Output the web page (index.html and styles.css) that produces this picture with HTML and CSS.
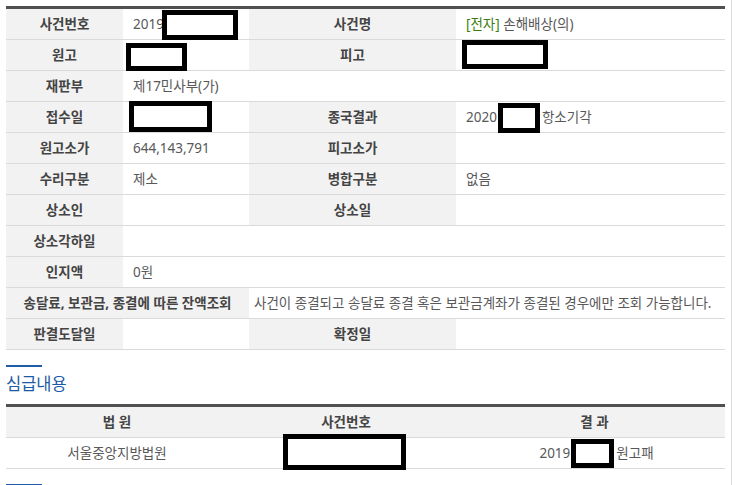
FILE: index.html
```html
<!DOCTYPE html>
<html lang="ko">
<head>
<meta charset="utf-8">
<title>사건일반내용</title>
<link rel="stylesheet" href="styles.css">
</head>
<body>
<div class="page">
  <table class="info">
    <colgroup>
      <col class="c-lab1"><col class="c-val1"><col class="c-lab2"><col class="c-val2">
    </colgroup>
    <tbody>
      <tr>
        <th>사건번호</th>
        <td>2019<span class="redact r1"></span></td>
        <th>사건명</th>
        <td><span class="tag">[전자]</span> 손해배상(의)</td>
      </tr>
      <tr>
        <th>원고</th>
        <td><span class="redact r2"></span></td>
        <th>피고</th>
        <td><span class="redact r3"></span></td>
      </tr>
      <tr>
        <th>재판부</th>
        <td colspan="3">제17민사부(가)</td>
      </tr>
      <tr>
        <th>접수일</th>
        <td><span class="redact r4"></span></td>
        <th>종국결과</th>
        <td>2020<span class="redact r5"></span>항소기각</td>
      </tr>
      <tr>
        <th>원고소가</th>
        <td>644,143,791</td>
        <th>피고소가</th>
        <td></td>
      </tr>
      <tr>
        <th>수리구분</th>
        <td>제소</td>
        <th>병합구분</th>
        <td>없음</td>
      </tr>
      <tr>
        <th>상소인</th>
        <td></td>
        <th>상소일</th>
        <td></td>
      </tr>
      <tr>
        <th>상소각하일</th>
        <td colspan="3"></td>
      </tr>
      <tr>
        <th>인지액</th>
        <td colspan="3">0원</td>
      </tr>
      <tr>
        <th colspan="2">송달료, 보관금, 종결에 따른 잔액조회</th>
        <td colspan="2" class="notice">사건이 종결되고 송달료 종결 혹은 보관금계좌가 종결된 경우에만 조회 가능합니다.</td>
      </tr>
      <tr>
        <th>판결도달일</th>
        <td></td>
        <th>확정일</th>
        <td></td>
      </tr>
    </tbody>
  </table>

  <section class="sub">
    <h3 class="sub-title">심급내용</h3>
    <table class="list">
      <colgroup>
        <col class="l1"><col class="l2"><col class="l3">
      </colgroup>
      <thead>
        <tr><th>법 원</th><th>사건번호</th><th>결 과</th></tr>
      </thead>
      <tbody>
        <tr>
          <td>서울중앙지방법원</td>
          <td><span class="redact r6"></span></td>
          <td class="result">2019<span class="redact r7"></span>원고패</td>
        </tr>
      </tbody>
    </table>
  </section>
  <div class="sub-bar"></div>
</div>
</body>
</html>
```

FILE: styles.css
```css
html, body {
  margin: 0;
  padding: 0;
  background: #fff;
  overflow: hidden;
}

body {
  font-family: "Noto Sans", "Noto Sans CJK KR", sans-serif;
  font-size: 13.5px;
  color: #555;
}

.page {
  width: 725px;
  min-height: 479px;
  padding: 6px 0 0 6px;
  border-right: 1px solid #dcdcdc;
}

table {
  border-collapse: separate;
  border-spacing: 0;
  table-layout: fixed;
  width: 719px;
  border-top: 3px solid #505050;
}

th, td {
  padding: 0;
  line-height: 30px;
  border-bottom: 1px solid #dadada;
  white-space: nowrap;
  overflow: visible;
  vertical-align: top;
}

.info th {
  background: #f2f2f2;
  color: #444;
  font-weight: bold;
  text-align: center;
}

.info td {
  padding-left: 10px;
  text-align: left;
  color: #585858;
}

.info td.notice {
  padding-left: 5px;
}

.c-lab1 { width: 117px; }
.c-val1 { width: 126px; }
.c-lab2 { width: 207px; }
.c-val2 { width: 269px; }

.tag {
  color: #3b7d12;
}

/* redaction boxes drawn over the screenshot values */
.redact {
  display: inline-block;
  box-sizing: border-box;
  border: 5px solid #000;
  background: #fff;
  vertical-align: top;
}
.r1 { width: 76px; height: 30px; margin: 1px 0 -1px -2px; }
.r2 { width: 61px; height: 28px; margin: 3px 0 -1px -7px; }
.r3 { width: 86px; height: 29px; margin: 0 0 0 -4px; }
.r4 { width: 83px; height: 31px; margin: -1px 0 0 -4px; }
.r5 { width: 42px; height: 30px; margin: 1px 2px -1px 1px; }
.r6 { width: 123px; height: 36px; margin: -4px 0 -2px -3px; }
.r7 { width: 43px; height: 29px; margin: 1px 2px 0 1px; }

.sub {
  margin-top: 15px;
}

.sub-title {
  margin: 0;
  font-size: 16.5px;
  font-weight: normal;
  line-height: 20px;
  color: #1d5aa6;
  padding-bottom: 10px;
}

.sub-title::before,
.sub-bar {
  content: "";
  display: block;
  width: 36px;
  height: 2px;
  background: #1f5ca8;
}

.sub-title::before {
  margin-bottom: 7px;
}

.sub-bar {
  margin-top: 15px;
}

.list th {
  background: #f2f2f2;
  color: #444;
  font-weight: bold;
  text-align: center;
}

.list td {
  text-align: center;
  color: #585858;
}

.list td.result {
  padding-left: 4px;
}

.l1 { width: 222px; }
.l2 { width: 236px; }
.l3 { width: 261px; }
```
